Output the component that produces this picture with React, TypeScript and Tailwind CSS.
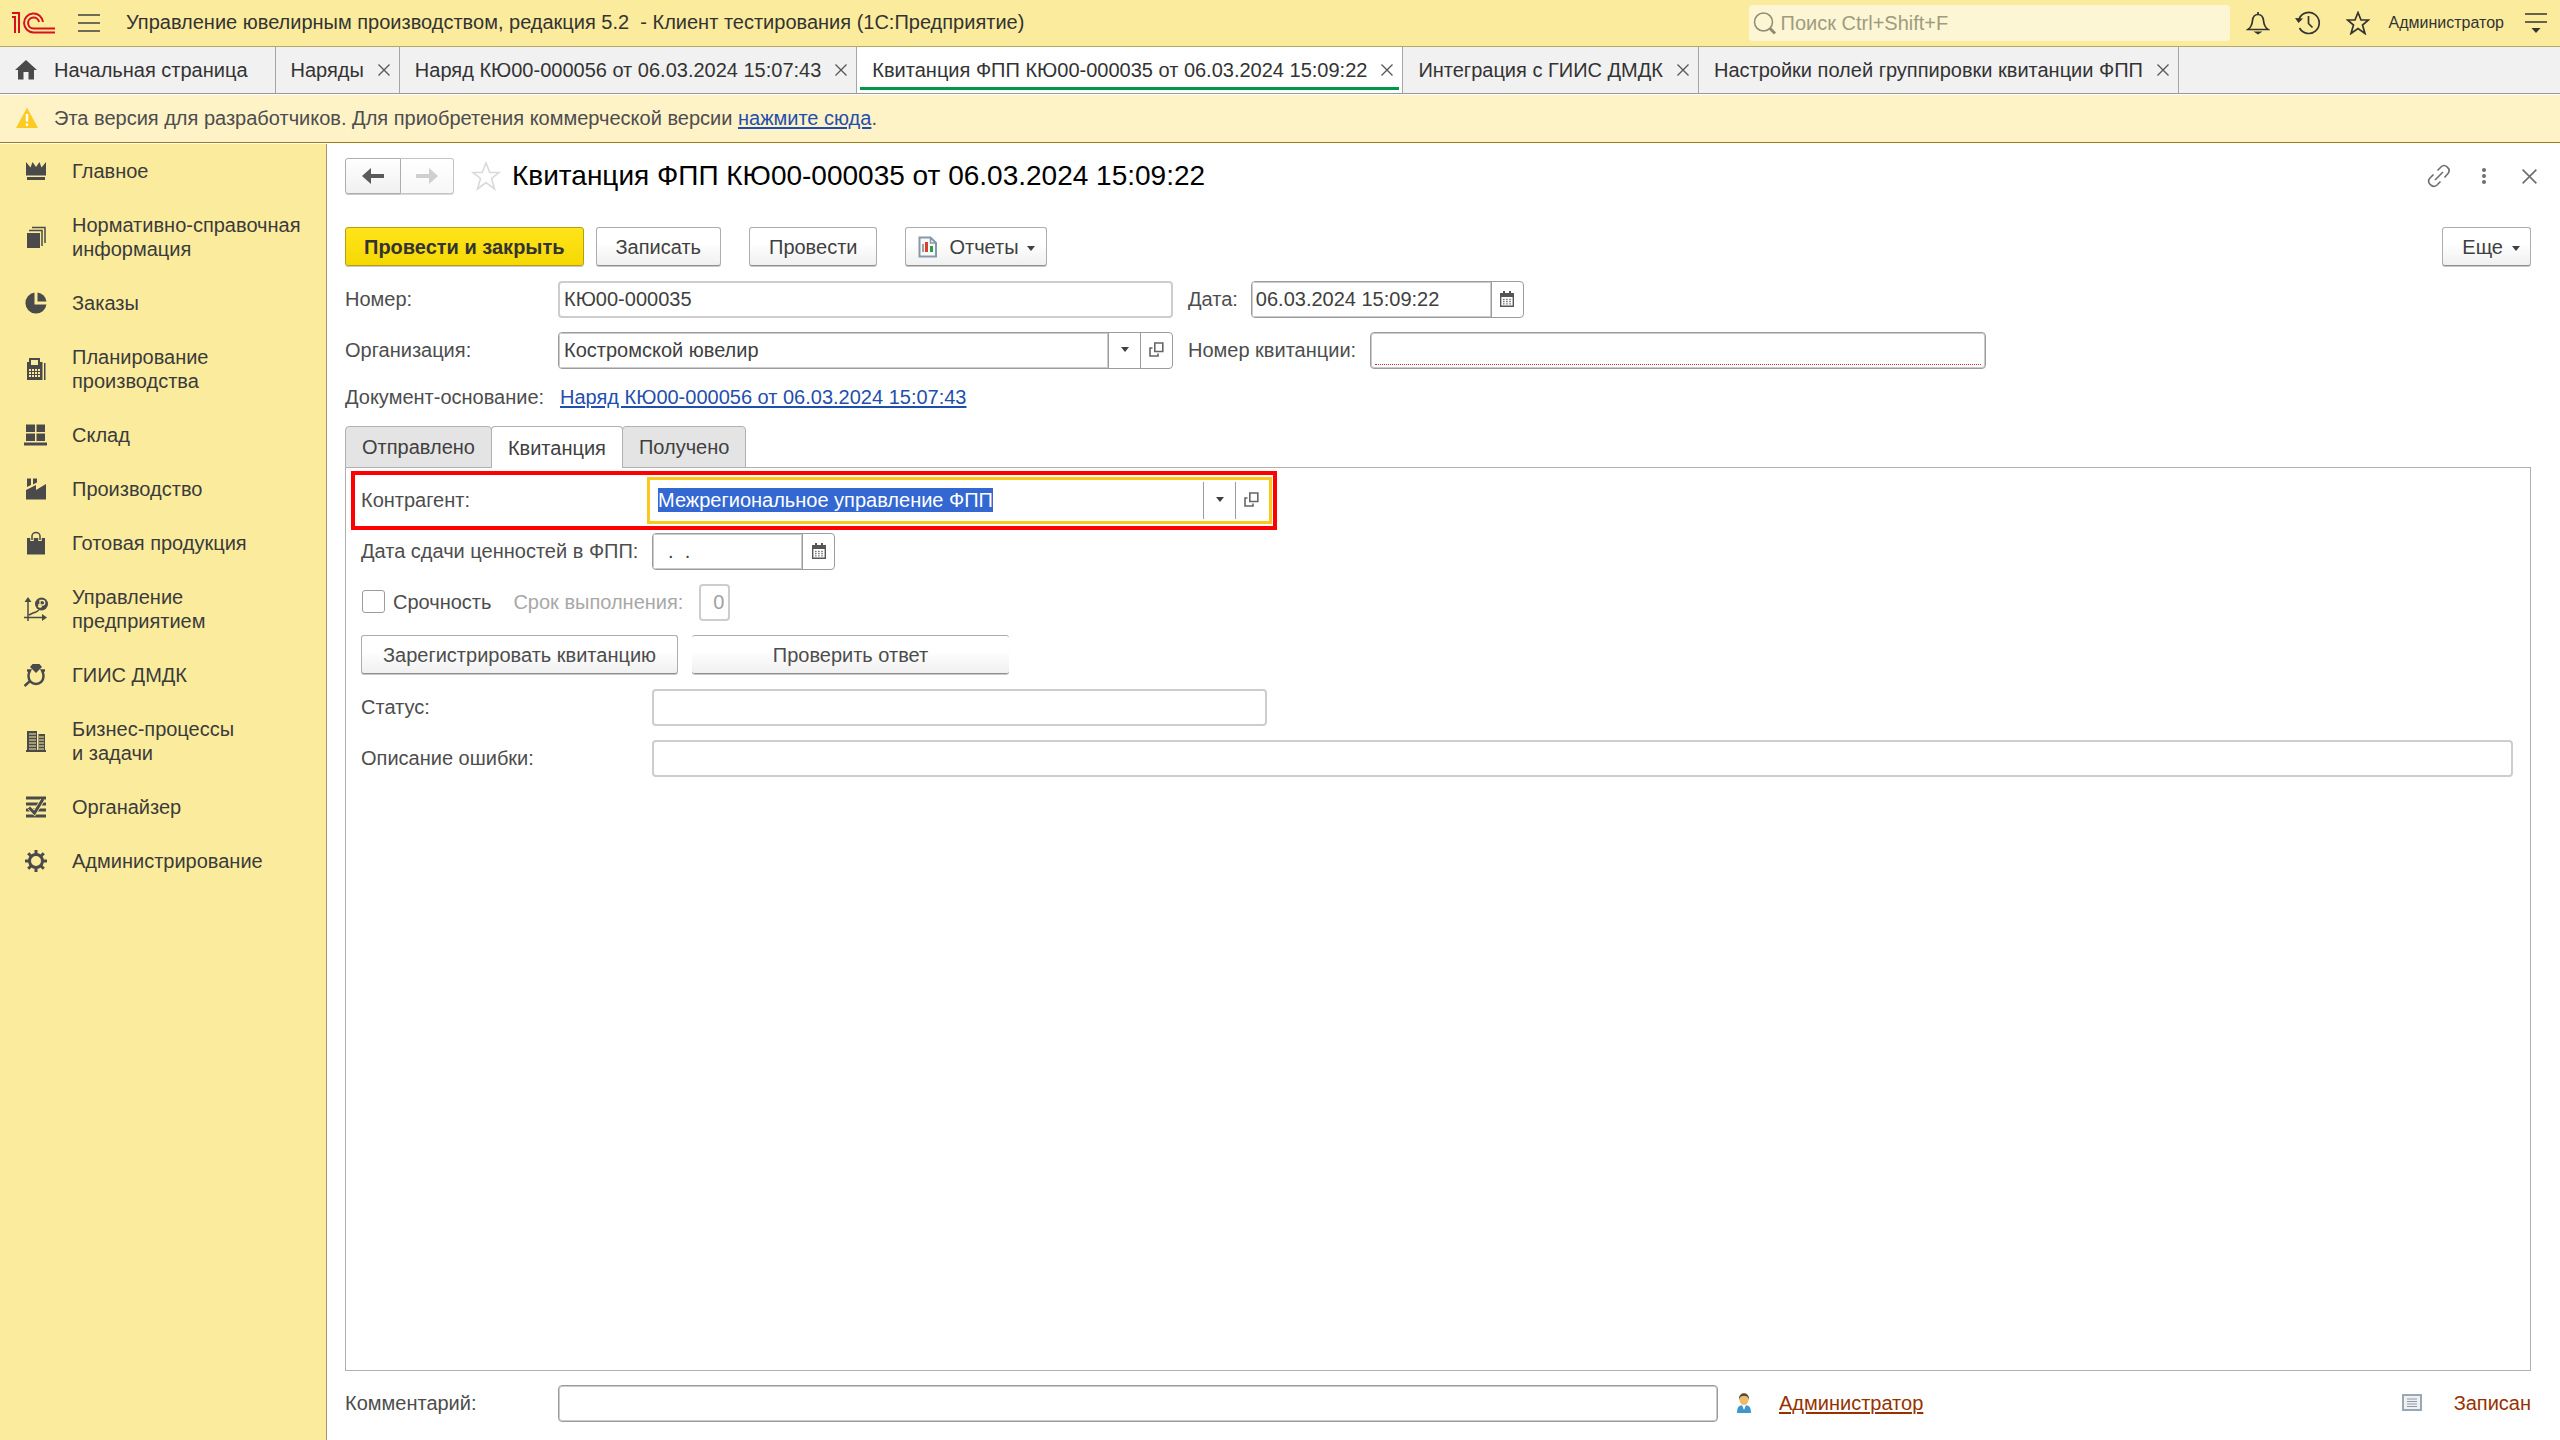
import { useEffect, useRef } from 'react';
import type { ReactNode } from 'react';

const TABS = [
  { label: 'Наряды' },
  { label: 'Наряд КЮ00-000056 от 06.03.2024 15:07:43' },
  { label: 'Квитанция ФПП КЮ00-000035 от 06.03.2024 15:09:22', active: true },
  { label: 'Интеграция с ГИИС ДМДК' },
  { label: 'Настройки полей группировки квитанции ФПП' },
];

const SECTIONS = [
  {
    lines: ['Главное'],
    icon: (
      <>
        <path d="M2 3l4.500 5.500L8.500 3l3.500 5 3.500-5 2 5.500L22 3v13.500H2z" />
        <path d="M3 18h18v3H3z" />
      </>
    ),
  },
  {
    lines: ['Нормативно-справочная', 'информация'],
    icon: (
      <>
        <path d="M3 8h13v15H3z" />
        <path d="M5 5.500h13V21M8 2.500h13V18" fill="none" stroke="currentColor" strokeWidth="1.500" />
      </>
    ),
  },
  {
    lines: ['Заказы'],
    icon: (
      <>
        <path d="M10.500 1.500A10.600 10.600 0 1 0 22.500 13.500H10.500z" />
        <path d="M13.500 1.500v9h9a10 10 0 0 0-9-9z" />
      </>
    ),
  },
  {
    lines: ['Планирование', 'производства'],
    icon: (
      <>
        <path d="M5 1h11v4h2.500v18H3V5h2zM7 3v5h7V3zM5 12v2h2v-2zm3 0v2h2v-2zm3 0v2h2v-2zm3 0v2h2v-2zm-9 3v2h2v-2zm3 0v2h2v-2zm3 0v2h2v-2zm3 0v2h2v-2zm-9 3v2h2v-2zm3 0v2h2v-2zm3 0v2h2v-2zm3 0v2h2v-2z" fillRule="evenodd" />
        <path d="M20 6h1.500v17H20z" />
      </>
    ),
  },
  {
    lines: ['Склад'],
    icon: <path d="M2 1.500h9V9H2zM12.500 1.500H21V9h-8.500zM2 10.500h9V18H2zM12.500 10.500H21V18h-8.500zM0 19.500h23v3H0z" />,
  },
  {
    lines: ['Производство'],
    icon: (
      <>
        <path d="M2 13l10-5v5l10-6v15.500H2z" />
        <path d="M3 1.500h4V8L3 10zM9 1.500h4v4L9 7.500z" />
      </>
    ),
  },
  {
    lines: ['Готовая продукция'],
    icon: (
      <>
        <path d="M3 7h18v16.500H3z" />
        <path d="M8 10V5a4 3.500 0 0 1 8 0v5" fill="none" stroke="#fbec9d" strokeWidth="3.500" />
        <path d="M8 9V5a4 3.500 0 0 1 8 0v4" fill="none" stroke="currentColor" strokeWidth="1.500" />
      </>
    ),
  },
  {
    lines: ['Управление', 'предприятием'],
    icon: (
      <>
        <path d="M4 2v22M0 20.500h20M5 18l4-2 3-1 3-2" fill="none" stroke="currentColor" strokeWidth="1.500" />
        <path d="M4 0l3.500 5h-7zM23 20.500l-5 3.500v-7z" />
        <circle cx="17.500" cy="7" r="6.500" />
        <path d="M16 11V3.500h2.500a2 2 0 0 1 0 4.500H14M14 9.700h4" fill="none" stroke="#fbec9d" strokeWidth="1.300" />
      </>
    ),
  },
  {
    lines: ['ГИИС ДМДК'],
    icon: (
      <>
        <path d="M8.500 1h7l2.500 3-6 6-6-6z" />
        <path d="M3 7.500h3c-1 2-1.500 3-1.500 5.500 0 5 3.500 8 7.500 8s7.500-3 7.500-8c0-2.500-.5-3.500-1.500-5.500h3M6 18l-5.500 5" fill="none" stroke="currentColor" strokeWidth="2.500" />
      </>
    ),
  },
  {
    lines: ['Бизнес-процессы', 'и задачи'],
    icon: (
      <>
        <path d="M3 2h10v20H3zM14.500 5H21v17h-6.500zM2 21h20v2H2z" />
        <path d="M5 5h7M5 8h7M5 11h7M5 14h7M5 17h7M5 20h7M15 8h5M15 11h5M15 14h5M15 17h5M15 20h5" stroke="#fbec9d" strokeWidth="1" />
      </>
    ),
  },
  {
    lines: ['Органайзер'],
    icon: (
      <>
        <path d="M2 3h20M2 9h20M2 15h20M2 21h20" stroke="currentColor" strokeWidth="2.800" fill="none" />
        <path d="M5.500 13l5 5 8-13" stroke="#fbec9d" strokeWidth="4.500" fill="none" />
        <path d="M5 12.500l5.500 5.500 8.500-14" stroke="currentColor" strokeWidth="3" fill="none" />
      </>
    ),
  },
  {
    lines: ['Администрирование'],
    icon: (
      <>
        <circle cx="12" cy="12" r="6.500" fill="none" stroke="currentColor" strokeWidth="3" />
        <path d="M12 1v4M12 19v4M1 12h4M19 12h4M4.200 4.200l3 3M16.800 16.800l3 3M19.800 4.200l-3 3M7.200 16.800l-3 3" stroke="currentColor" strokeWidth="3" />
      </>
    ),
  },
];

const BUTTON =
  'flex h-[39px] items-center justify-center rounded-[3px] border border-[#adadad] border-b-[#8f8f8f] bg-linear-to-b from-white from-40% to-[#f0f0f0] shadow-[0_1px_0_#c9c9c9]';
const FIELD = 'h-[37px] rounded-[4px] bg-white px-[4px] text-[#404040] outline-none';
const EDITABLE = 'border border-[#9c9c9c] shadow-[inset_0_0_0_1px_#cbcbcb]';
const READONLY = 'border-2 border-[#cdcdcd]';

function Cross({ className = 'size-3' }: { className?: string }) {
  return (
    <svg viewBox="0 0 12 12" className={className} fill="none" stroke="currentColor" strokeWidth="1.300">
      <path d="M.5.500l11 11M11.500.500l-11 11" />
    </svg>
  );
}

function Caret() {
  return (
    <svg viewBox="0 0 8 5" className="h-[5px] w-2" fill="#404040">
      <path d="M0 0h8L4 5z" />
    </svg>
  );
}

function CalendarIcon() {
  return (
    <svg viewBox="0 0 14 16" className="h-4 w-3.5">
      <path d="M.7 2.700h12.600v12.600H.7z" fill="#fff" stroke="#555" strokeWidth="1.400" />
      <path d="M0 2h14v4H0zM3 0h2v3H3zM9 0h2v3H9z" fill="#555" />
      <path d="M3 8.500h8M3 10.700h8M3 12.900h8" stroke="#777" strokeWidth="1.300" strokeDasharray="1.600 1.500" />
    </svg>
  );
}

function OpenIcon() {
  return (
    <svg viewBox="0 0 15 15" className="size-[15px]" fill="none" stroke="#666" strokeWidth="1.600">
      <path d="M5.800 1h8v8.500h-8z" />
      <path d="M3.500 6H1v8h8v-2.500" />
    </svg>
  );
}

function SideButton({ label, children }: { label: string; children: ReactNode }) {
  return (
    <button aria-label={label} className="flex w-8 items-center justify-center border-l border-[#9c9c9c] pb-[2px]">
      {children}
    </button>
  );
}

function DateField({ id, value, width }: { id: string; value: string; width: string }) {
  return (
    <div className={`flex h-[37px] overflow-hidden rounded-[4px] border border-[#9c9c9c] bg-white ${width}`}>
      <input
        id={id}
        defaultValue={value}
        className="min-w-0 flex-1 whitespace-pre px-[4px] pb-[2px] text-[#404040] shadow-[inset_0_0_0_1px_#cbcbcb] outline-none"
      />
      <SideButton label="Выбрать дату">
        <CalendarIcon />
      </SideButton>
    </div>
  );
}

function TopBar() {
  return (
    <header className="flex h-[47px] shrink-0 items-center border-b border-[#b3a867] bg-[#fbec9d] pr-[13px] pl-[11px]">
      <svg viewBox="0 0 44 24" className="h-6 w-11" fill="none" stroke="#d8101c" strokeWidth="2">
        <path d="M1 6h3v16M1 2h7v20" />
        <path d="M32 11a9.500 9.500 0 1 0-9.500 10.500H44" />
        <path d="M28 11a5.500 5.500 0 1 0-5.500 6.500H44" />
      </svg>
      <button aria-label="Главное меню" className="ml-[23px] text-[#404040]">
        <svg viewBox="0 0 22 18" className="h-[18px] w-[22px]" stroke="currentColor" strokeWidth="1.600">
          <path d="M0 1h22M0 9h22M0 17h22" />
        </svg>
      </button>
      <h1 className="ml-[26px] whitespace-pre pb-[2px] text-[#333333]">
        Управление ювелирным производством, редакция 5.2  - Клиент тестирования (1С:Предприятие)
      </h1>
      <label className="ml-auto flex h-9 w-[481px] items-center gap-1 rounded-[4px] bg-[#fdf6d5] px-1 text-[#8f8a70]">
        <svg viewBox="0 0 24 24" className="size-6" fill="none" stroke="currentColor">
          <circle cx="10.500" cy="11" r="9" strokeWidth="1.500" />
          <path d="M17 17.500l5 5" strokeWidth="3" />
        </svg>
        <input
          aria-label="Поиск"
          placeholder="Поиск Ctrl+Shift+F"
          className="min-w-0 flex-1 bg-transparent outline-none placeholder:text-[#a09b80]"
        />
      </label>
      <div className="ml-4 flex items-center gap-[25px] text-[#333333]">
        <button aria-label="Уведомления">
          <svg viewBox="0 0 24 24" className="size-6" fill="none" stroke="currentColor" strokeWidth="1.700">
            <path d="M2 18.500c3-2 4-4 4.500-9C7 5 9 3.500 12 3.500S17 5 17.500 9.500c.5 5 1.500 7 4.500 9z" />
            <path d="M12 1v2" />
            <path d="M7.500 20.500h9L12 23.500z" fill="currentColor" stroke="none" />
          </svg>
        </button>
        <button aria-label="История">
          <svg viewBox="0 0 26 24" className="h-6 w-[26px]" fill="none" stroke="currentColor" strokeWidth="1.700">
            <path d="M4 8a10.500 10.500 0 1 1 .5 9M13.500 5v7.500l4 4" />
            <path d="M0 7l8 .5L3.500 12z" fill="currentColor" stroke="none" />
          </svg>
        </button>
        <button aria-label="Избранное">
          <svg viewBox="0 0 24 24" className="size-6" fill="none" stroke="currentColor" strokeWidth="1.700">
            <path d="M12 1.500l3 7.500h7.500l-6 5 2.500 8.500-7-5-7 5L7.500 14l-6-5H9z" />
          </svg>
        </button>
      </div>
      <span className="ml-[19px] text-[16px] text-[#333333]">Администратор</span>
      <button aria-label="Сервис и настройки" className="ml-[21px] text-[#333333]">
        <svg viewBox="0 0 22 20" className="h-5 w-[22px]">
          <path d="M0 1h22M0 9h22" stroke="currentColor" strokeWidth="1.700" />
          <path d="M6.500 15h9L11 20z" fill="currentColor" />
        </svg>
      </button>
    </header>
  );
}

function WindowTabs() {
  return (
    <nav className="flex h-[47px] shrink-0 border-b border-[#999999] bg-[#f1f1f1] text-[#333333]">
      <a href="#home" className="flex items-center gap-[17px] border-r border-[#a6a6a6] pr-[27px] pl-[15px]">
        <svg viewBox="0 0 22 20" className="h-5 w-[22px]" fill="#4a4a4a">
          <path d="M11 0l11 10h-3v9.500h-5.500V12h-5v7.500H3V10H0z" />
        </svg>
        Начальная страница
      </a>
      {TABS.map((tab) => (
        <div
          key={tab.label}
          className={`relative flex items-center gap-[14px] border-r border-[#a6a6a6] pr-[9px] pl-[15px] whitespace-nowrap ${tab.active ? 'bg-white' : ''}`}
        >
          <a href="#window">{tab.label}</a>
          <button aria-label="Закрыть" className="text-[#555555]">
            <Cross />
          </button>
          {tab.active && <span className="absolute inset-x-[3px] bottom-[3px] h-[3px] bg-[#009846]" />}
        </div>
      ))}
    </nav>
  );
}

function Notice() {
  return (
    <p className="mt-px mb-px flex h-12 shrink-0 items-center border-b border-[#9b7f16] bg-[#fef2c7] pb-[2px] pl-4 text-[#4d4d4d]">
      <svg viewBox="0 0 22 20" className="mr-4 h-5 w-[22px]">
        <path d="M11 .5L21.500 20H.5z" fill="#fbcb21" stroke="#fbcb21" strokeLinejoin="round" />
        <path d="M11 6v7.500M11 15.500v2.500" stroke="#fff" strokeWidth="2.400" />
      </svg>
      <span>
        Эта версия для разработчиков. Для приобретения коммерческой версии{' '}
        <a href="#buy" className="text-[#1f4fae] underline decoration-2 underline-offset-2">
          нажмите сюда
        </a>
        .
      </span>
    </p>
  );
}

function Sidebar() {
  return (
    <aside className="flex w-[327px] shrink-0 flex-col gap-[30px] border-r border-[#9f986c] bg-[#fbec9d] pt-[15px] pl-6">
      {SECTIONS.map((section) => (
        <a key={section.lines[0]} href="#section" className="flex items-center gap-6 text-[#3b3b3b]">
          <svg viewBox="0 0 24 24" className="size-6 shrink-0 text-[#4a4a4a]" fill="currentColor">
            {section.icon}
          </svg>
          <span>
            {section.lines.map((line) => (
              <span key={line} className="block">
                {line}
              </span>
            ))}
          </span>
        </a>
      ))}
    </aside>
  );
}

function FormHeader() {
  return (
    <div className="flex h-9 items-center">
      <div className="flex">
        <button
          aria-label="Назад"
          className="flex h-9 w-14 items-center justify-center rounded-l-[3px] border border-[#adadad] bg-linear-to-b from-white to-[#f0f0f0] shadow-[0_1px_0_#c9c9c9]"
        >
          <svg viewBox="0 0 22 16" className="h-4 w-[22px]" fill="#5a5a5a">
            <path d="M0 8l9-8v6h13v4H9v6z" />
          </svg>
        </button>
        <button
          aria-label="Вперед"
          className="flex h-9 w-[53px] items-center justify-center rounded-r-[3px] border border-l-0 border-[#c4c4c4] bg-linear-to-b from-white to-[#f7f7f7] shadow-[0_1px_0_#dadada]"
        >
          <svg viewBox="0 0 22 16" className="h-4 w-[22px]" fill="#cfcfcf">
            <path d="M22 8l-9-8v6H0v4h13v6z" />
          </svg>
        </button>
      </div>
      <button aria-label="В избранное" className="ml-[17px]">
        <svg viewBox="0 0 30 30" className="size-[30px]" fill="none" stroke="#d9d9d9" strokeWidth="1.600">
          <path d="M15 2l3.800 9.500H28l-7.500 6 3 10.500-8.500-6.500L6.500 28l3-10.500-7.500-6h9.200z" />
        </svg>
      </button>
      <h2 className="ml-[11px] text-[28px] leading-9 text-black">Квитанция ФПП КЮ00-000035 от 06.03.2024 15:09:22</h2>
      <div className="mr-[-6px] ml-auto flex items-center text-[#6e6e6e]">
        <button aria-label="Получить ссылку">
          <svg viewBox="0 0 24 24" className="size-6" fill="none" stroke="currentColor" strokeWidth="1.600">
            <path d="M8 16l8-8" />
            <path d="M10.500 6.500l3.500-3.500c4-4 10.500 2 7 6.500l-3.500 4" />
            <path d="M6.500 10.500L3 14c-4 4.500 2.500 11 7 7l3.500-3.500" />
          </svg>
        </button>
        <button aria-label="Действия" className="ml-[31px]">
          <svg viewBox="0 0 4 16" className="h-4 w-1" fill="currentColor">
            <circle cx="2" cy="2" r="2" />
            <circle cx="2" cy="8" r="2" />
            <circle cx="2" cy="14" r="2" />
          </svg>
        </button>
        <button aria-label="Закрыть" className="ml-9">
          <Cross className="size-[15px]" />
        </button>
      </div>
    </div>
  );
}

function CommandBar() {
  return (
    <div className="mt-[33px] flex text-[#404040]">
      <button className="h-[39px] rounded-[3px] border border-[#b79d10] bg-linear-to-b from-[#ffe41a] to-[#f5d800] px-[18px] font-bold text-[#333333] shadow-[0_1px_0_#c9c9c9]">
        Провести и закрыть
      </button>
      <button className={`${BUTTON} ml-3 px-[19px]`}>Записать</button>
      <button className={`${BUTTON} ml-7 px-[19px]`}>Провести</button>
      <button className={`${BUTTON} ml-7 pr-[11px] pl-3`}>
        <svg viewBox="0 0 20 22" className="mr-[11px] h-[22px] w-5">
          <path d="M1.500 1.500h11L18 7v13.500H1.500z" fill="#f7fafc" stroke="#8797a8" strokeWidth="2" />
          <path d="M12.500 1.500V7H18" fill="none" stroke="#8797a8" strokeWidth="1.500" />
          <path d="M4 8h2v8H4z" fill="#a0a0a0" />
          <path d="M7 6h3v10H7z" fill="#e03c2c" />
          <path d="M12 10h3v6h-3z" fill="#2f9e3c" />
        </svg>
        Отчеты
        <span className="pt-[3px] pl-2">
          <Caret />
        </span>
      </button>
      <button className={`${BUTTON} ml-auto pr-[10px] pl-[19px]`}>
        Еще
        <span className="pt-[3px] pl-[9px]">
          <Caret />
        </span>
      </button>
    </div>
  );
}

function ReceiptTab() {
  const contractor = useRef<HTMLInputElement>(null);

  useEffect(() => {
    contractor.current?.focus();
    contractor.current?.select();
  }, []);

  return (
    <section className="flex flex-1 flex-col gap-[14px] border border-[#b0b0b0] px-[15px] pt-[14px] pr-[17px]">
      <div className="relative flex items-center">
        <label htmlFor="contractor" className="w-[291px] pb-[2px]">
          Контрагент:
        </label>
        <div className="flex h-[37px] w-[615px] bg-white outline-3 outline-offset-2 outline-[#fbc81e]">
          <input
            id="contractor"
            ref={contractor}
            defaultValue="Межрегиональное управление ФПП"
            className="min-w-0 flex-1 px-[6px] pb-[2px] text-[#404040] outline-none selection:bg-[#3367d1] selection:text-white"
          />
          <SideButton label="Выбрать">
            <Caret />
          </SideButton>
          <SideButton label="Открыть">
            <OpenIcon />
          </SideButton>
        </div>
        <span className="pointer-events-none absolute top-[-11px] left-[-10px] h-[59px] w-[926px] border-4 border-[#ff0000]" />
      </div>

      <div className="flex items-center">
        <label htmlFor="handover" className="w-[291px] pb-[2px]">
          Дата сдачи ценностей в ФПП:
        </label>
        <DateField id="handover" value="  .  ." width="w-[183px]" />
      </div>

      <div className="flex items-center">
        <label className="flex items-center gap-2 pb-[2px] pl-px">
          <input type="checkbox" className="size-[23px] appearance-none rounded-[3px] border border-[#9c9c9c] bg-white" />
          Срочность
        </label>
        <label htmlFor="term" className="ml-[22px] pb-[2px] text-[#a8a8a8]">
          Срок выполнения:
        </label>
        <input
          id="term"
          disabled
          defaultValue="0"
          className={`${FIELD} ${READONLY} ml-4 w-[31px] text-right text-[#a0a0a0]`}
        />
      </div>

      <div className="flex h-10 gap-[14px]">
        <button className={`${BUTTON} w-[317px]`}>Зарегистрировать квитанцию</button>
        <button className={`${BUTTON} w-[317px] border-x-0`}>Проверить ответ</button>
      </div>

      <div className="flex items-center">
        <label htmlFor="status" className="w-[291px] pb-[2px]">
          Статус:
        </label>
        <input id="status" readOnly className={`${FIELD} ${READONLY} w-[615px]`} />
      </div>

      <div className="flex items-center">
        <label htmlFor="error" className="w-[291px] pb-[2px]">
          Описание ошибки:
        </label>
        <input id="error" readOnly className={`${FIELD} ${READONLY} flex-1`} />
      </div>
    </section>
  );
}

function Footer() {
  return (
    <footer className="flex items-center pt-[14px] pb-[18px]">
      <label htmlFor="comment" className="w-[213px] shrink-0 pb-[2px]">
        Комментарий:
      </label>
      <input id="comment" className={`${FIELD} ${EDITABLE} w-[1160px] min-w-0`} />
      <div className="flex flex-1 items-center pb-[2px] pl-[18px] text-[#963200]">
        <svg viewBox="0 0 16 20" className="h-5 w-4">
          <path d="M1 20c0-6 2-8 7-8s7 2 7 8z" fill="#3d97cc" />
          <path d="M6 12h4l-2 5z" fill="#fff" />
          <ellipse cx="8" cy="6.500" rx="4.500" ry="5.500" fill="#eebb6c" />
          <path d="M3 7c-1-9 11-9 10 0-1-4-3-4-5-4s-4 0-5 4z" fill="#5b4a33" />
        </svg>
        <a href="#author" className="ml-[27px] underline decoration-2 underline-offset-2">
          Администратор
        </a>
        <svg viewBox="0 0 20 17" className="ml-auto h-[17px] w-5">
          <path d="M1 1h18v15H1z" fill="#eef1f4" stroke="#9aa7b5" strokeWidth="2" />
          <path d="M5 5h10M5 7.500h10M5 10h10M5 12.500h10" stroke="#8d98a6" strokeWidth="1" />
        </svg>
        <span className="ml-8">Записан</span>
      </div>
    </footer>
  );
}

export default function App() {
  return (
    <div className="flex min-h-screen flex-col bg-white font-['Liberation_Sans',Arial,sans-serif] text-[20px] leading-6">
      <TopBar />
      <WindowTabs />
      <Notice />
      <div className="flex flex-1">
        <Sidebar />
        <main className="flex min-w-0 flex-1 flex-col pt-[14px] pr-[29px] pl-[18px] text-[#4d4d4d]">
          <FormHeader />
          <CommandBar />

          <div className="mt-[15px] flex flex-col gap-[14px]">
            <div className="flex items-center">
              <label htmlFor="number" className="w-[213px] pb-[2px]">
                Номер:
              </label>
              <input id="number" defaultValue="КЮ00-000035" className={`${FIELD} ${READONLY} w-[615px]`} />
              <label htmlFor="date" className="ml-[15px] pb-[2px]">
                Дата:
              </label>
              <span className="ml-[13px]">
                <DateField id="date" value="06.03.2024 15:09:22" width="w-[273px]" />
              </span>
            </div>
            <div className="flex items-center">
              <label htmlFor="organization" className="w-[213px] pb-[2px]">
                Организация:
              </label>
              <div className="flex h-[37px] w-[615px] overflow-hidden rounded-[4px] border border-[#9c9c9c] bg-white">
                <input
                  id="organization"
                  defaultValue="Костромской ювелир"
                  className="min-w-0 flex-1 px-[5px] pb-[2px] text-[#404040] shadow-[inset_0_0_0_1px_#cbcbcb] outline-none"
                />
                <SideButton label="Выбрать">
                  <Caret />
                </SideButton>
                <SideButton label="Открыть">
                  <OpenIcon />
                </SideButton>
              </div>
              <label htmlFor="receipt" className="ml-[15px] pb-[2px]">
                Номер квитанции:
              </label>
              <div className={`${FIELD} ${EDITABLE} ml-[14px] w-[616px] pb-[3px]`}>
                <input id="receipt" className="h-full w-full border-b border-dotted border-[#e0262b] outline-none" />
              </div>
            </div>
          </div>

          <div className="mt-4 flex">
            <span className="w-[215px]">Документ-основание:</span>
            <a href="#basis" className="text-[#1f4fae] underline decoration-2 underline-offset-2">
              Наряд КЮ00-000056 от 06.03.2024 15:07:43
            </a>
          </div>

          <div role="tablist" className="relative mt-[17px] -mb-px flex h-[42px] text-[#404040]">
            <button role="tab" className="rounded-t-[4px] border border-[#b0b0b0] bg-[#e4e4e4] px-4">
              Отправлено
            </button>
            <button
              role="tab"
              aria-selected="true"
              className="-ml-px rounded-t-[4px] border border-b-0 border-[#b0b0b0] bg-white px-4"
            >
              Квитанция
            </button>
            <button role="tab" className="-ml-px rounded-t-[4px] border border-[#b0b0b0] bg-[#e4e4e4] px-4">
              Получено
            </button>
          </div>
          <ReceiptTab />
          <Footer />
        </main>
      </div>
    </div>
  );
}
